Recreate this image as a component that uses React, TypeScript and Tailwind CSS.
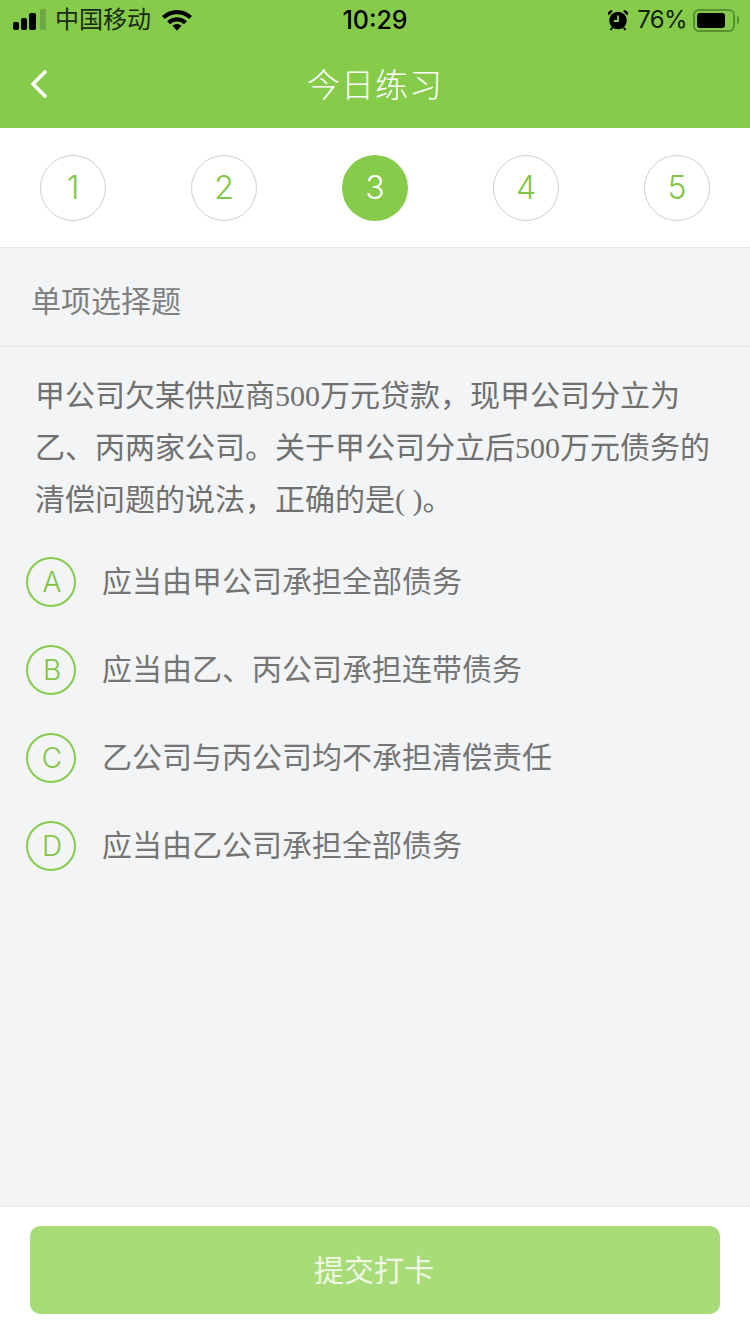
import { ChevronLeft } from "lucide-react";

const sans = "font-['Inter','Noto_Sans_CJK_SC',sans-serif]";

const steps = [1, 2, 3, 4, 5];
const options = [
  { key: "A", text: "应当由甲公司承担全部债务" },
  { key: "B", text: "应当由乙、丙公司承担连带债务" },
  { key: "C", text: "乙公司与丙公司均不承担清偿责任" },
  { key: "D", text: "应当由乙公司承担全部债务" },
];

function StatusBar() {
  return (
    <div className="h-10 flex items-center text-black relative">
      <div className="flex items-center pl-[13px] flex-1">
        <svg width="34" height="22" viewBox="0 0 34 22" fill="#000">
          <rect x="0" y="13" width="6" height="8" rx="2" />
          <rect x="8" y="9" width="6" height="12" rx="2" />
          <rect x="16" y="4" width="7" height="17" rx="2" />
          <rect x="27" y="0" width="6" height="21" rx="1.5" fill="#6fa848" />
        </svg>
        <span className="text-2xl ml-[8px] leading-none text-[#1a2a10]">中国移动</span>
        <svg className="ml-[11px]" width="30" height="22" viewBox="0 0 30 22" fill="#000">
          <path d="M15 1c5.800 0 10.800 2.100 15 6l-2.900 3.100C23.900 7 19.700 5.200 15 5.200S6.100 7 2.900 10.100L0 7C4.200 3.100 9.200 1 15 1z" />
          <path d="M15 8.300c3.700 0 7.200 1.400 9.900 3.900l-2.900 3c-1.900-1.700-4.300-2.800-7-2.800s-5.100 1.100-7 2.800l-2.900-3c2.700-2.500 6.200-3.900 9.900-3.900z" />
          <path d="M15 15c1.700 0 3.300.7 4.500 1.800L15 21.800l-4.500-5C11.700 15.700 13.300 15 15 15z" />
        </svg>
      </div>
      <span className="text-[25px] font-medium absolute left-0 right-0 text-center leading-none">10:29</span>
      <div className="flex items-center pr-[11px]">
        <svg width="22" height="22" viewBox="0 0 22 22" fill="#000">
          <circle cx="11" cy="11.500" r="8.800" />
          <path d="M1.500 6.500 6 2 3.500 1 .8 3.800zM20.500 6.500 16 2 18.500 1 21.200 3.800z" />
          <path d="M11 6.500v5.500H6.800" stroke="#86cc4a" strokeWidth="1.800" fill="none" />
          <path d="M5.500 18.500 3.500 21M16.500 18.500 18.500 21" stroke="#000" strokeWidth="2" />
        </svg>
        <span className="text-[24px] ml-[8px] leading-none tracking-[-0.6px] text-[#14210c]">76%</span>
        <div className="ml-[6px] w-[42px] h-[23px] rounded-[6px] border-2 border-[#5a8f33] p-[2px]">
          <div className="h-full w-[28px] rounded-[3px] bg-black" />
        </div>
        <div className="ml-[2px] w-[2px] h-[8px] rounded-r-sm bg-[#5a8f33]" />
      </div>
    </div>
  );
}

export default function App() {
  return (
    <div className={`w-[750px] h-[1334px] flex flex-col bg-[#f2f4f6] overflow-hidden ${sans}`}>
      <header className="bg-[#86cc4a]">
        <StatusBar />
        <div className="h-[88px] relative flex items-center justify-center">
          <ChevronLeft className="absolute left-[15px] top-5 text-white" size={48} strokeWidth={1.9} />
          <h1 className="pt-[3px] text-[33px] text-white font-light tracking-[1px]">今日练习</h1>
        </div>
      </header>

      <div className="h-[120px] bg-white border-b border-[#e8e8e8] flex items-start justify-between px-10 pt-[27px]">
        {steps.map((n) => (
          <div
            key={n}
            className={
              n === 3
                ? "w-[66px] h-[66px] rounded-full bg-[#86cc4a] text-white flex items-center justify-center text-[32px] font-light"
                : "w-[66px] h-[66px] rounded-full border border-[#cfcfcf] text-[#80c545] flex items-center justify-center text-[32px] font-light"
            }
          >
            {n}
          </div>
        ))}
      </div>

      <div className="h-[99px] border-b border-[#e6e8ea] flex items-center pl-[31px] pt-2 text-[30px] text-[#808080]">
        单项选择题
      </div>

      <p className="pl-[35px] pr-[30px] pt-[23px] text-[30px] leading-[52px] text-[#707070] font-['Liberation_Serif','Noto_Sans_CJK_SC',serif]">
        甲公司欠某供应商500万元贷款，现甲公司分立为乙、丙两家公司。关于甲公司分立后500万元债务的清偿问题的说法，正确的是( )。
      </p>

      <ul className="pl-[26px] pt-[12px]">
        {options.map((o) => (
          <li key={o.key} className="h-[88px] flex items-center">
            <span className="w-[50px] h-[50px] pl-[2px] rounded-full border-2 border-[#86cc4a] text-[#80c545] flex items-center justify-center text-[28px] font-light">
              {o.key}
            </span>
            <span className="ml-[26px] pb-[2px] text-[30px] text-[#757575]">{o.text}</span>
          </li>
        ))}
      </ul>

      <div className="mt-auto h-[128px] bg-white border-t border-[#ececec] px-[30px] pt-[19px]">
        <button className="w-full h-[88px] pr-[2px] rounded-[10px] bg-[#a8dc78] text-[30px] text-[#eef8e4]">
          提交打卡
        </button>
      </div>
    </div>
  );
}
